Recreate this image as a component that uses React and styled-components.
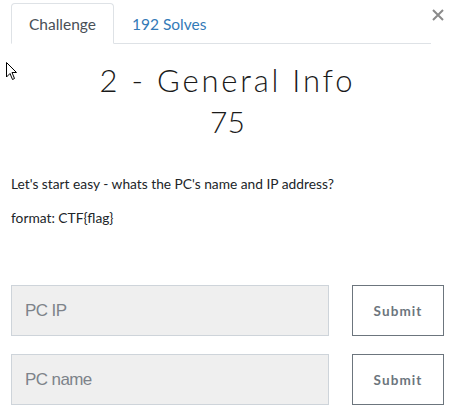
import React from "react";
import styled, { createGlobalStyle } from "styled-components";

const GlobalStyle = createGlobalStyle`
  body {
    margin: 0;
    background: #fff;
    font-family: Lato, "Open Sans", sans-serif;
  }
`;

const Page = styled.div`
  position: relative;
  width: 467px;
  height: 417px;
  padding: 3px 23px 0 11px;
  box-sizing: border-box;
  overflow: hidden;
`;

const Header = styled.div`
  display: flex;
  align-items: flex-start;
`;

const Tabs = styled.div`
  flex: 1;
  display: flex;
  border-bottom: 1px solid #dee2e6;
`;

const Tab = styled.div`
  height: 41px;
  box-sizing: border-box;
  padding: 0 17px;
  display: flex;
  align-items: center;
  font-size: 15.5px;
  margin-bottom: -1px;
  border: 1px solid ${(p) => (p.$active ? "#dee2e6" : "transparent")};
  border-bottom-color: ${(p) => (p.$active ? "#fff" : "transparent")};
  border-radius: 4px 4px 0 0;
  background: ${(p) => (p.$active ? "#fff" : "transparent")};
  color: ${(p) => (p.$active ? "#495057" : "#337ab7")};
`;

const Close = styled.div`
  width: 13px;
  height: 24px;
  display: flex;
  align-items: center;
  justify-content: center;
`;

const Title = styled.h2`
  margin: 17px 0 0;
  text-align: center;
  font-family: Lato, sans-serif;
  font-weight: 300;
  font-size: 31px;
  letter-spacing: 2.8px;
  line-height: 38px;
  color: #1a1a1a;
`;

const Value = styled.h3`
  margin: 4px 0 0;
  text-align: center;
  font-weight: 300;
  font-size: 30px;
  line-height: 36px;
  color: #1a1a1a;
`;

const Description = styled.div`
  margin-top: 36px;
  font-size: 13.75px;
  color: #212529;
  p {
    margin: 0 0 17px;
    line-height: 17px;
  }
`;

const Form = styled.div`
  margin-top: 59px;
  display: flex;
  flex-direction: column;
  gap: 18px;
`;

const Row = styled.div`
  display: flex;
  gap: 23px;
`;

const Input = styled.input`
  flex: 0 0 318px;
  height: 51px;
  box-sizing: border-box;
  padding: 0 13px;
  background: #efefef;
  border: 1px solid #ced4da;
  font-family: "Liberation Sans", Arial, sans-serif;
  font-size: 17px;
  letter-spacing: -0.6px;
  outline: none;
  &::placeholder {
    color: #7d838a;
  }
`;

const Button = styled.button`
  width: 93px;
  height: 51px;
  background: #fff;
  border: 1px solid #6c757d;
  font-family: Lato, sans-serif;
  font-weight: 700;
  font-size: 13.5px;
  letter-spacing: 1.1px;
  color: #6c757d;
`;

const Cursor = styled.svg`
  position: absolute;
  left: 6px;
  top: 62px;
`;

export default function App() {
  return (
    <Page>
      <GlobalStyle />
      <Header>
        <Tabs>
          <Tab $active>Challenge</Tab>
          <Tab>192 Solves</Tab>
        </Tabs>
        <Close>
          <svg width="12" height="12" viewBox="0 0 12 12">
            <path d="M1 1 L11 11 M11 1 L1 11" stroke="#8a8a8a" strokeWidth="2" />
          </svg>
        </Close>
      </Header>
      <Title>2 - General Info</Title>
      <Value>75</Value>
      <Description>
        <p>Let's start easy - whats the PC's name and IP address?</p>
        <p>format: CTF{"{flag}"}</p>
      </Description>
      <Form>
        <Row>
          <Input placeholder="PC IP" />
          <Button>Submit</Button>
        </Row>
        <Row>
          <Input placeholder="PC name" />
          <Button>Submit</Button>
        </Row>
      </Form>
      <Cursor width="12" height="19" viewBox="0 0 12 19">
        <path
          d="M0.5 0.5 L0.5 15 L4 11.5 L6.5 17.5 L8.5 16.5 L6 10.5 L10.5 10.5 Z"
          fill="#fff"
          stroke="#000"
          strokeWidth="1"
        />
      </Cursor>
    </Page>
  );
}
